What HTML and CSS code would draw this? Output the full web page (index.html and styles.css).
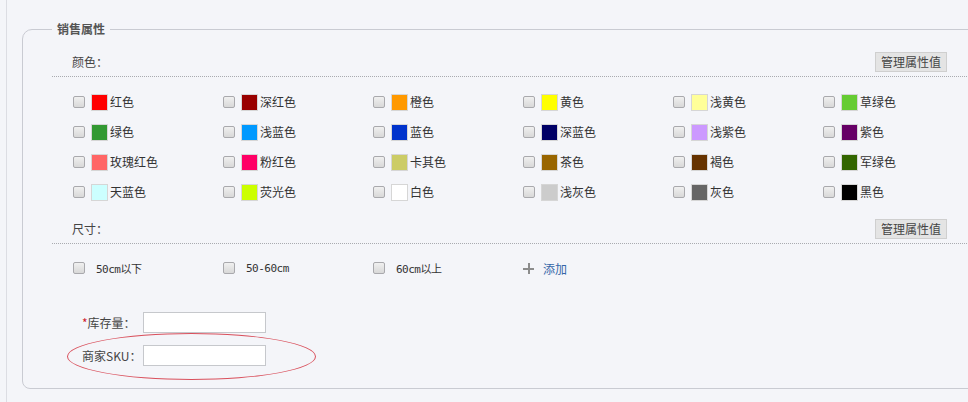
FILE: index.html
```html
<!DOCTYPE html>
<html lang="zh-CN">
<head>
<meta charset="utf-8">
<title>销售属性</title>
<link rel="stylesheet" href="styles.css">
</head>
<body>
<div class="page">
  <div class="stripe">
    <fieldset class="sale-box">
      <legend class="sale-legend">销售属性</legend>

      <div class="attr-head">
        <span class="attr-name">颜色：</span>
        <button class="manage-btn" type="button">管理属性值</button>
      </div>
      <ul class="color-grid">
        <li class="opt"><span class="cb"></span><span class="sw" style="background:#ff0000"></span><span class="lbl">红色</span></li>
        <li class="opt"><span class="cb"></span><span class="sw" style="background:#990000"></span><span class="lbl">深红色</span></li>
        <li class="opt"><span class="cb"></span><span class="sw" style="background:#ff9900"></span><span class="lbl">橙色</span></li>
        <li class="opt"><span class="cb"></span><span class="sw" style="background:#ffff00"></span><span class="lbl">黄色</span></li>
        <li class="opt"><span class="cb"></span><span class="sw" style="background:#ffff99"></span><span class="lbl">浅黄色</span></li>
        <li class="opt"><span class="cb"></span><span class="sw" style="background:#66cc33"></span><span class="lbl">草绿色</span></li>

        <li class="opt"><span class="cb"></span><span class="sw" style="background:#339933"></span><span class="lbl">绿色</span></li>
        <li class="opt"><span class="cb"></span><span class="sw" style="background:#0099ff"></span><span class="lbl">浅蓝色</span></li>
        <li class="opt"><span class="cb"></span><span class="sw" style="background:#0033cc"></span><span class="lbl">蓝色</span></li>
        <li class="opt"><span class="cb"></span><span class="sw" style="background:#000066"></span><span class="lbl">深蓝色</span></li>
        <li class="opt"><span class="cb"></span><span class="sw" style="background:#cc99ff"></span><span class="lbl">浅紫色</span></li>
        <li class="opt"><span class="cb"></span><span class="sw" style="background:#660066"></span><span class="lbl">紫色</span></li>

        <li class="opt"><span class="cb"></span><span class="sw" style="background:#ff6666"></span><span class="lbl">玫瑰红色</span></li>
        <li class="opt"><span class="cb"></span><span class="sw" style="background:#ff0066"></span><span class="lbl">粉红色</span></li>
        <li class="opt"><span class="cb"></span><span class="sw" style="background:#cccc66"></span><span class="lbl">卡其色</span></li>
        <li class="opt"><span class="cb"></span><span class="sw" style="background:#996600"></span><span class="lbl">茶色</span></li>
        <li class="opt"><span class="cb"></span><span class="sw" style="background:#663300"></span><span class="lbl">褐色</span></li>
        <li class="opt"><span class="cb"></span><span class="sw" style="background:#336600"></span><span class="lbl">军绿色</span></li>

        <li class="opt"><span class="cb"></span><span class="sw" style="background:#ccffff"></span><span class="lbl">天蓝色</span></li>
        <li class="opt"><span class="cb"></span><span class="sw" style="background:#ccff00"></span><span class="lbl">荧光色</span></li>
        <li class="opt"><span class="cb"></span><span class="sw" style="background:#ffffff"></span><span class="lbl">白色</span></li>
        <li class="opt"><span class="cb"></span><span class="sw" style="background:#cccccc"></span><span class="lbl">浅灰色</span></li>
        <li class="opt"><span class="cb"></span><span class="sw" style="background:#666666"></span><span class="lbl">灰色</span></li>
        <li class="opt"><span class="cb"></span><span class="sw" style="background:#000000"></span><span class="lbl">黑色</span></li>
      </ul>

      <div class="attr-head size-head">
        <span class="attr-name">尺寸：</span>
        <button class="manage-btn" type="button">管理属性值</button>
      </div>
      <ul class="size-row">
        <li class="opt size-opt"><span class="cb"></span><span class="size-lbl">50cm以下</span></li>
        <li class="opt size-opt"><span class="cb"></span><span class="size-lbl">50-60cm</span></li>
        <li class="opt size-opt"><span class="cb"></span><span class="size-lbl">60cm以上</span></li>
        <li class="opt add-opt"><span class="plus"></span><a class="add-link" href="#">添加</a></li>
      </ul>

      <div class="stock-form">
        <div class="form-row">
          <label class="form-label"><span class="req">*</span>库存量：</label>
          <span class="text-input"></span>
        </div>
        <div class="form-row sku-row">
          <label class="form-label">商家SKU：</label>
          <span class="text-input"></span>
          <span class="mark-ellipse"></span>
        </div>
      </div>
    </fieldset>
  </div>
</div>
</body>
</html>
```

FILE: styles.css
```css
* { box-sizing: border-box; }

html, body {
  margin: 0;
  padding: 0;
  background: #f4f5f9;
}

body {
  font-family: "Noto Sans CJK SC", "Liberation Sans", sans-serif;
  font-size: 12px;
  color: #444;
}

.page {
  width: 968px;
  height: 402px;
  overflow: hidden;
  padding-left: 6px;
}

.stripe {
  border-left: 1px solid #dcdde3;
  height: 100%;
  padding-top: 20px;
}

.sale-box {
  margin: 0 -40px 0 15px;
  padding: 0 0 22px 0;
  border: 1px solid #c9cbd2;
  border-radius: 10px 0 0 8px;
  min-width: 0;
}

.sale-legend {
  margin-left: 29px;
  padding: 0 5px;
  font-size: 12px;
  font-weight: bold;
  line-height: 18px;
  color: #555;
}

.attr-head {
  margin: 14px 0 0 29px;
  padding: 0 60px 4px 20px;
  border-bottom: 1px dotted #a9abb0;
  display: flex;
  align-items: center;
  justify-content: space-between;
}

.attr-name {
  color: #444;
  line-height: 20px;
}

.manage-btn {
  height: 20px;
  width: 72px;
  padding: 0;
  font: inherit;
  color: #444;
  background: #e4e4e4;
  border: 1px solid #cfcfcf;
  line-height: 18px;
}

.color-grid,
.size-row {
  list-style: none;
  margin: 10px 0 0 0;
  padding: 0 0 0 50px;
  display: grid;
  grid-template-columns: repeat(6, 150px);
  grid-auto-rows: 30px;
}

.opt {
  display: flex;
  align-items: center;
  color: #333;
}

.cb {
  width: 12px;
  height: 12px;
  border: 1px solid #a9a9ad;
  border-radius: 2px;
  background: linear-gradient(#f0f0f0, #d8d8d8);
  margin-right: 6px;
  flex: none;
}

.sw {
  width: 17px;
  height: 17px;
  border: 1px solid #d6d6d6;
  margin-right: 2px;
  flex: none;
}

.lbl {
  line-height: 16px;
}

.size-head {
  margin-top: 12px;
}

.size-row {
  margin-top: 9px;
}

.size-opt .cb {
  margin-right: 11px;
}

.size-lbl {
  font-family: "DejaVu Sans Mono", "Noto Sans CJK SC", monospace;
  font-size: 11px;
  letter-spacing: -0.5px;
}

.plus {
  position: relative;
  width: 11px;
  height: 11px;
  margin-right: 9px;
  flex: none;
}

.plus::before,
.plus::after {
  content: "";
  position: absolute;
  background: #8c8c8c;
}

.plus::before {
  left: 0;
  top: 5px;
  width: 11px;
  height: 2px;
}

.plus::after {
  left: 5px;
  top: 0;
  width: 2px;
  height: 11px;
}

.add-link {
  color: #3466a8;
  text-decoration: none;
}

.stock-form {
  margin-top: 29px;
  padding-left: 59px;
  display: flex;
  flex-direction: column;
  gap: 12px;
}

.form-row {
  position: relative;
  display: flex;
  align-items: center;
}

.form-label {
  width: 61px;
  color: #444;
}

.req {
  color: #d0202c;
}

.text-input {
  display: block;
  width: 123px;
  height: 21px;
  background: #fff;
  border: 1px solid #c6c8cc;
}

.mark-ellipse {
  position: absolute;
  left: -15px;
  top: -12px;
  width: 249px;
  height: 47px;
  border: 1px solid #d9505c;
  border-radius: 50%;
  pointer-events: none;
}
```
